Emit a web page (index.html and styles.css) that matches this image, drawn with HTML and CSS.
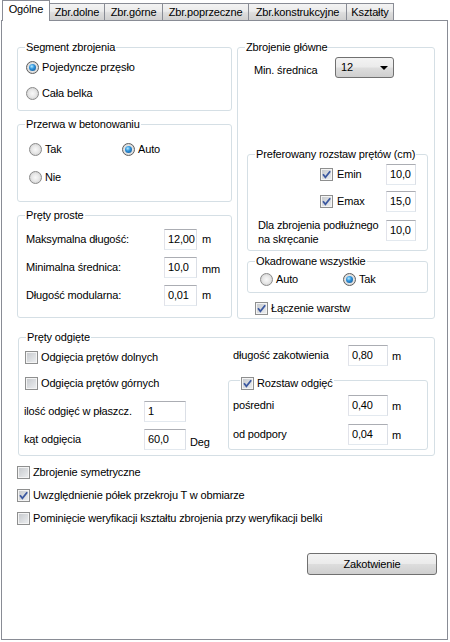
FILE: index.html
```html
<!DOCTYPE html>
<html lang="pl">
<head>
<meta charset="utf-8">
<title>Ogólne</title>
<link rel="stylesheet" href="styles.css">
</head>
<body>
<div class="tabs">
  <div class="tab active t1">Ogólne</div>
  <div class="tab t2">Zbr.dolne</div>
  <div class="tab t3">Zbr.górne</div>
  <div class="tab t4">Zbr.poprzeczne</div>
  <div class="tab t5">Zbr.konstrukcyjne</div>
  <div class="tab t6">Kształty</div>
</div>
<div class="panel">
  <div class="top">
    <div class="left">
      <fieldset class="grp seg">
        <legend>Segment zbrojenia</legend>
        <div class="seg-body">
          <label class="opt"><span class="radio on"></span>Pojedyncze przęsło</label>
          <label class="opt"><span class="radio"></span>Cała belka</label>
        </div>
      </fieldset>
      <fieldset class="grp brk">
        <legend>Przerwa w betonowaniu</legend>
        <div class="brk-body">
          <label class="opt"><span class="radio"></span>Tak</label>
          <label class="opt"><span class="radio on"></span>Auto</label>
          <label class="opt"><span class="radio"></span>Nie</label>
        </div>
      </fieldset>
      <fieldset class="grp straight">
        <legend>Pręty proste</legend>
        <div class="form3">
          <span>Maksymalna długość:</span><span class="inp">12,00</span><span>m</span>
          <span>Minimalna średnica:</span><span class="inp">10,0</span><span class="low">mm</span>
          <span>Długość modularna:</span><span class="inp">0,01</span><span>m</span>
        </div>
      </fieldset>
    </div>
    <fieldset class="grp main">
      <legend>Zbrojenie główne</legend>
      <div class="main-body">
        <div class="minrow">
          <span class="minlbl">Min. średnica</span>
          <span class="combo">12<span class="arrow"></span></span>
        </div>
        <fieldset class="grp pref">
          <legend>Preferowany rozstaw prętów (cm)</legend>
          <div class="pref-body">
            <div class="prow">
              <label class="opt ecb"><span class="cb"><svg width="11" height="11" viewBox="0 0 11 11"><path d="M2 5.3 L4.4 8.3 L9.2 2.2" fill="none" stroke="#3b58a0" stroke-width="1.8"/></svg></span>Emin</label>
              <span class="inp w30">10,0</span>
            </div>
            <div class="prow">
              <label class="opt ecb"><span class="cb"><svg width="11" height="11" viewBox="0 0 11 11"><path d="M2 5.3 L4.4 8.3 L9.2 2.2" fill="none" stroke="#3b58a0" stroke-width="1.8"/></svg></span>Emax</label>
              <span class="inp w30">15,0</span>
            </div>
            <div class="dla">
              <span class="dla-txt">Dla zbrojenia podłużnego<br>na skręcanie</span>
              <span class="inp w30">10,0</span>
            </div>
          </div>
        </fieldset>
        <fieldset class="grp okad">
          <legend>Okadrowane wszystkie</legend>
          <div class="okad-body">
            <label class="opt"><span class="radio"></span>Auto</label>
            <label class="opt"><span class="radio on"></span>Tak</label>
          </div>
        </fieldset>
        <label class="opt lacz"><span class="cb"><svg width="11" height="11" viewBox="0 0 11 11"><path d="M2 5.3 L4.4 8.3 L9.2 2.2" fill="none" stroke="#3b58a0" stroke-width="1.8"/></svg></span>Łączenie warstw</label>
      </div>
    </fieldset>
  </div>

  <fieldset class="grp odg">
    <legend>Pręty odgięte</legend>
    <div class="odg-body">
      <div class="odg-left">
        <label class="opt cbrow"><span class="cb"></span>Odgięcia prętów dolnych</label>
        <label class="opt cbrow second"><span class="cb"></span>Odgięcia prętów górnych</label>
        <div class="lrow ilosc"><span class="llbl">ilość odgięć w płaszcz.</span><span class="inp w42">1</span></div>
        <div class="lrow kat"><span class="llbl">kąt odgięcia</span><span class="inp w42">60,0</span><span class="deg">Deg</span></div>
      </div>
      <div class="odg-right">
        <div class="zrow"><span class="rlbl">długość zakotwienia</span><span class="inp w40">0,80</span><span class="u">m</span></div>
        <fieldset class="grp rozstaw">
          <legend><span class="cb"><svg width="11" height="11" viewBox="0 0 11 11"><path d="M2 5.3 L4.4 8.3 L9.2 2.2" fill="none" stroke="#3b58a0" stroke-width="1.8"/></svg></span>Rozstaw odgięć</legend>
          <div class="roz-body">
            <div class="rrow"><span class="rlbl">pośredni</span><span class="inp w40">0,40</span><span class="u">m</span></div>
            <div class="rrow"><span class="rlbl">od podpory</span><span class="inp w40">0,04</span><span class="u">m</span></div>
          </div>
        </fieldset>
      </div>
    </div>
  </fieldset>

  <div class="checks">
    <label class="opt"><span class="cb"></span>Zbrojenie symetryczne</label>
    <label class="opt"><span class="cb"><svg width="11" height="11" viewBox="0 0 11 11"><path d="M2 5.3 L4.4 8.3 L9.2 2.2" fill="none" stroke="#3b58a0" stroke-width="1.8"/></svg></span>Uwzględnienie półek przekroju T w obmiarze</label>
    <label class="opt"><span class="cb"></span>Pominięcie weryfikacji kształtu zbrojenia przy weryfikacji belki</label>
  </div>

  <div class="btnrow">
    <span class="btn">Zakotwienie</span>
  </div>
</div>
</body>
</html>
```
FILE: styles.css
```css
* { box-sizing: border-box; }

body {
  margin: 0;
  background: #fff;
  font-family: "Liberation Sans", Arial, sans-serif;
  font-size: 11px;
  line-height: 13px;
  letter-spacing: -0.15px;
  color: #000;
}

/* ---------- tabs ---------- */
.tabs {
  display: flex;
  align-items: flex-start;
  height: 21px;
  padding-left: 2px;
  position: relative;
  z-index: 1;
}
.tab {
  height: 17px;
  margin-top: 3px;
  margin-left: -1px;
  border: 1px solid #898c95;
  border-bottom: 0;
  background: linear-gradient(#f3f3f3, #ebebeb 45%, #dddddd 55%, #d0d0d0);
  display: flex;
  align-items: center;
  justify-content: center;
  padding-top: 1px;
  white-space: nowrap;
}
.tab.active {
  height: 21px;
  margin-top: 0;
  background: #fff;
  padding: 0 0 4px;
}
.t1 { width: 48px; margin-left: 0; }
.t2 { width: 56px; }
.t3 { width: 59px; }
.t4 { width: 87px; }
.t5 { width: 99px; }
.t6 { width: 48px; }

/* ---------- panel ---------- */
.panel {
  width: 447px;
  height: 620px;
  margin: -1px 0 0 1px;
  border: 1px solid #898c95;
  padding: 20px 0 0 15px;
  background: #fff;
}

.top { display: flex; gap: 5px; }
.left { width: 215px; display: flex; flex-direction: column; gap: 7px; }

.grp {
  margin: 0;
  padding: 0;
  border: 1px solid #d5dfe5;
  border-radius: 3px;
  min-width: 0;
}
.grp > legend {
  margin-left: 7px;
  padding: 0 1px;
  height: 13px;
  line-height: 13px;
  white-space: nowrap;
}

/* controls */
.opt {
  display: flex;
  align-items: center;
  gap: 3px;
  height: 13px;
  white-space: nowrap;
}
.radio {
  width: 13px;
  height: 13px;
  flex: none;
  border-radius: 50%;
  border: 1px solid #8a8a8a;
  background: radial-gradient(circle, #f8f8f8 0, #e8e8e8 45%, #c6c6c6 100%);
  display: flex;
  align-items: center;
  justify-content: center;
}
.radio.on { border-color: #5e5e5e; }
.radio.on::after {
  content: "";
  width: 7px;
  height: 7px;
  border-radius: 50%;
  background: radial-gradient(circle at 40% 35%, #b5ecff 0, #2f93dc 40%, #0f4c86 100%);
}
.cb {
  width: 13px;
  height: 13px;
  flex: none;
  border: 1px solid #8e8f8f;
  background: linear-gradient(135deg, #c4c7cb, #eef0f2);
  box-shadow: inset 0 0 0 1px #f4f4f4;
  display: flex;
  align-items: center;
  justify-content: center;
}
.cb svg { display: block; }

.inp {
  height: 21px;
  border: 1px solid;
  border-color: #abadb3 #dbdfe6 #e3e9ef #e2e3ea;
  padding: 0 3px;
  display: flex;
  align-items: center;
  background: #fff;
  white-space: nowrap;
  overflow: hidden;
}
.w30 { width: 30px; }
.w40 { width: 40px; }
.w42 { width: 42px; }

/* Segment */
.seg { height: 70px; }
.seg-body { padding: 7px 0 0 8px; display: flex; flex-direction: column; gap: 13px; }

/* Przerwa */
.brk { height: 84px; }
.brk-body {
  padding: 12px 0 0 11px;
  display: grid;
  grid-template-columns: 93px auto;
  row-gap: 15px;
  justify-content: start;
}

/* Pręty proste */
.straight { height: 109px; }
.form3 {
  padding: 7px 0 0 8px;
  display: grid;
  grid-template-columns: 133px 33px auto;
  column-gap: 5px;
  row-gap: 7px;
  align-items: center;
  white-space: nowrap;
}
.low { margin-top: 4px; }

/* Zbrojenie główne */
.main { width: 198px; height: 278px; }
.main-body { padding: 3px 6px 0 9px; }
.minrow { display: flex; align-items: center; height: 21px; padding-left: 7px; }
.minlbl { width: 81px; margin-top: 5px; white-space: nowrap; }
.combo {
  width: 59px;
  height: 21px;
  border: 1px solid #707070;
  border-radius: 3px;
  background: linear-gradient(#f3f3f3, #ebebeb 48%, #dddddd 52%, #cfcfcf);
  display: flex;
  align-items: center;
  justify-content: space-between;
  padding: 0 5px 1px 5px;
}
.arrow {
  width: 0;
  height: 0;
  margin-top: 2px;
  border-left: 4px solid transparent;
  border-right: 4px solid transparent;
  border-top: 4px solid #000;
}

.pref { margin-top: 70px; height: 103px; }
.pref-body { padding: 3px 11px 0 0; display: flex; flex-direction: column; gap: 6px; }
.prow { display: flex; align-items: center; height: 21px; }
.ecb { margin-left: 72px; gap: 4px; }
.prow .inp, .dla .inp { margin-left: auto; }
.dla { display: flex; align-items: flex-start; }
.dla-txt { padding-left: 10px; line-height: 14px; white-space: nowrap; }
.dla .inp { margin-top: 2px; }

.okad { margin-top: 4px; height: 38px; }
.okad-body {
  padding: 5px 0 0 12px;
  display: grid;
  grid-template-columns: 83px auto;
  justify-content: start;
}
.lacz { margin: 9px 0 0 8px; }

/* Pręty odgięte */
.odg { margin: 12px 0 0 1px; width: 417px; height: 125px; }
.odg-body { display: flex; }
.odg-left { width: 209px; padding: 7px 0 0 5px; display: flex; flex-direction: column; }
.cbrow { margin-left: 1px; }
.cbrow.second { margin-top: 13px; }
.lrow { display: flex; align-items: center; height: 21px; white-space: nowrap; }
.ilosc { margin-top: 11px; }
.kat { margin-top: 7px; }
.llbl { width: 120px; }
.deg { margin: 6px 0 0 4px; }

.odg-right { width: 200px; padding-top: 1px; }
.zrow { display: flex; align-items: center; height: 21px; padding-left: 5px; white-space: nowrap; }
.rlbl { width: 115px; }
.u { margin: 2px 0 0 4px; }

.rozstaw { margin-top: 4px; height: 80px; }
.rozstaw > legend {
  height: 20px;
  margin-left: 11px;
  display: flex;
  align-items: flex-end;
  gap: 3px;
}
.roz-body { padding: 5px 0 0 4px; display: flex; flex-direction: column; gap: 8px; }
.rrow { display: flex; align-items: center; height: 21px; white-space: nowrap; }

/* bottom checks */
.checks { margin-top: 10px; display: flex; flex-direction: column; gap: 10px; }

.btnrow { display: flex; justify-content: flex-end; margin-top: 28px; padding-right: 10px; }
.btn {
  width: 130px;
  height: 22px;
  border: 1px solid #707070;
  border-radius: 3px;
  background: linear-gradient(#f3f3f3, #ebebeb 48%, #dddddd 52%, #cfcfcf);
  display: flex;
  align-items: center;
  justify-content: center;
}
```
